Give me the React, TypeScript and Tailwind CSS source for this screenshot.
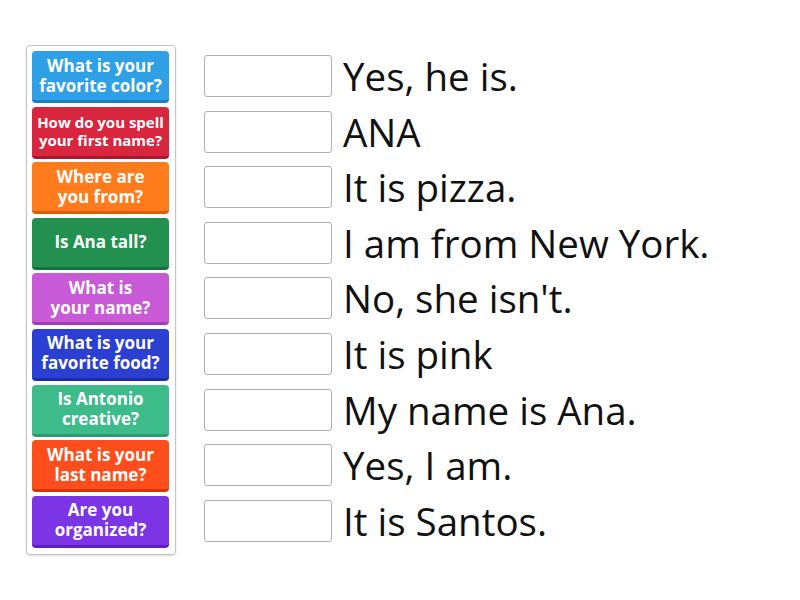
import React from "react";

const tiles: { lines: string[]; bg: string; border: string; small?: boolean }[] = [
  { lines: ["What is your", "favorite color?"], bg: "bg-[#2f9fe6]", border: "border-[#1b7cc4]" },
  { lines: ["How do you spell", "your first name?"], bg: "bg-[#d8263f]", border: "border-[#a8172c]", small: true },
  { lines: ["Where are", "you from?"], bg: "bg-[#ff7b1c]", border: "border-[#d95f0a]" },
  { lines: ["Is Ana tall?"], bg: "bg-[#22904f]", border: "border-[#17703b]" },
  { lines: ["What is", "your name?"], bg: "bg-[#c85ad8]", border: "border-[#a33cb4]" },
  { lines: ["What is your", "favorite food?"], bg: "bg-[#2b40d2]", border: "border-[#1c2ca8]" },
  { lines: ["Is Antonio", "creative?"], bg: "bg-[#3dbb8b]", border: "border-[#2a9a6f]" },
  { lines: ["What is your", "last name?"], bg: "bg-[#ff4d1b]", border: "border-[#d4360a]" },
  { lines: ["Are you", "organized?"], bg: "bg-[#7b35e4]", border: "border-[#5b1fc0]" },
];

const answers = [
  "Yes, he is.",
  "ANA",
  "It is pizza.",
  "I am from New York.",
  "No, she isn't.",
  "It is pink",
  "My name is Ana.",
  "Yes, I am.",
  "It is Santos.",
];

export default function App() {
  return (
    <div
      className="w-[800px] h-[600px] bg-white relative"
      style={{ fontFamily: '"Open Sans", "Noto Sans", sans-serif' }}
    >
      <div className="flex pt-[45px] pl-[26px]">
        <div className="w-[150px] h-[510px] border border-[#c4c4c4] rounded-[4px] shadow-[0_1px_2px_rgba(0,0,0,0.15)] px-[5px] pt-[5px] flex flex-col gap-[3.6px]">
          {tiles.map((t, i) => (
            <div
              key={i}
              className={`h-[52px] w-[137px] rounded-[4px] border-b-[3px] ${t.bg} ${t.border} flex flex-col items-center justify-center text-white font-bold ${
                t.small ? "text-[15px] leading-[18px]" : "text-[17px] leading-[20px]"
              }`}
            >
              {t.lines.map((l, j) => (
                <div key={j} className="whitespace-nowrap">{l}</div>
              ))}
            </div>
          ))}
        </div>
        <div className="ml-[28px] pt-[10px] flex flex-col gap-[13.6px]">
          {answers.map((a, i) => (
            <div key={i} className="flex items-center h-[42px]">
              <div className="w-[128px] h-[42px] border border-[#b0b0b0] rounded-[3px] bg-white shrink-0" />
              <div className="ml-[11px] text-[38.5px] leading-[42px] text-[#111] whitespace-nowrap">{a}</div>
            </div>
          ))}
        </div>
      </div>
    </div>
  );
}
